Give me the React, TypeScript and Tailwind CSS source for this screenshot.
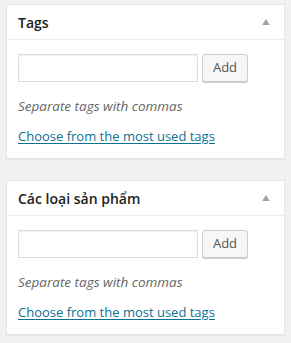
import React from "react";

function TagBox({ title }: { title: string }) {
  return (
    <div className="border border-[#e5e5e5] bg-white shadow-[0_1px_1px_rgba(0,0,0,0.04)]">
      {/* Header: title + collapse arrow */}
      <div className="flex h-[35px] items-center justify-between border-b border-[#eeeeee] pl-[11px] pr-[14px]">
        <h2 className="text-[14px] font-semibold text-[#222]">{title}</h2>
        <svg viewBox="0 0 8 6" className="h-[6px] w-[8px]">
          <path d="M4 0 L8 6 L0 6 Z" fill="#a0a5aa" />
        </svg>
      </div>
      <div className="px-[11px] pb-[12px] pt-[14px]">
        <div className="flex items-center gap-[4px]">
          <input
            type="text"
            className="h-[28px] w-[180px] border border-[#dddddd] bg-white shadow-[inset_0_1px_2px_rgba(0,0,0,0.07)] outline-none"
          />
          <button className="h-[28px] w-[46px] rounded-[3px] border border-[#cccccc] bg-[#f7f7f7] text-[13px] text-[#555] shadow-[0_1px_0_#ccc]">
            Add
          </button>
        </div>
        <p className="mt-[14px] text-[13.5px] italic leading-[20px] text-[#666]">
          Separate tags with commas
        </p>
        <a
          href="#"
          className="mt-[10px] block text-[13px] leading-[20px] text-[#0e7196] underline underline-offset-2"
        >
          Choose from the most used tags
        </a>
      </div>
    </div>
  );
}

export default function App() {
  return (
    <div
      className="flex h-[343px] w-[291px] flex-col gap-[21px] bg-[#f1f1f1] pl-[6px] pr-[6px] pt-[4px]"
      style={{ fontFamily: '"Open Sans", "Noto Sans", sans-serif' }}
    >
      <TagBox title="Tags" />
      <TagBox title="Các loại sản phẩm" />
    </div>
  );
}
